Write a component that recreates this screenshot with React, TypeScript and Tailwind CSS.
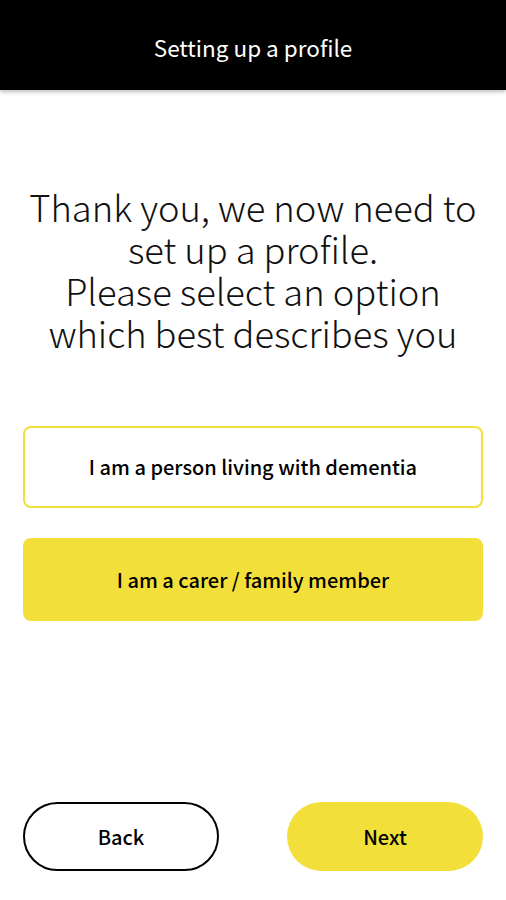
export default function App() {
  return (
    <div
      className="flex h-[900px] w-full flex-col bg-white text-black"
      style={{ fontFamily: '"Noto Sans CJK JP", "Noto Sans", sans-serif' }}
    >
      {/* Header */}
      <header className="flex h-[90px] items-center justify-center bg-black shadow-[0_2px_4px_rgba(0,0,0,0.25)]">
        <h1 className="pt-[6px] text-[22.5px] font-normal text-white">Setting up a profile</h1>
      </header>

      {/* Prompt */}
      <div className="mt-[95px] px-2 text-center text-[36.3px] font-light leading-[42px] text-[#111]">
        Thank you, we now need to
        <br />
        set up a profile.
        <br />
        Please select an option
        <br />
        which best describes you
      </div>

      {/* Options */}
      <div className="mt-[73px] flex flex-col gap-[30px] px-[23px]">
        <button className="flex h-[82px] items-center justify-center rounded-[8px] border-2 border-[#f2df3a] bg-white text-[20px] font-medium">
          I am a person living with dementia
        </button>
        <button className="flex h-[83px] items-center justify-center rounded-[8px] bg-[#f2df3a] text-[20px] font-medium">
          I am a carer / family member
        </button>
      </div>

      {/* Footer nav */}
      <div className="mt-auto mb-[29px] flex items-center justify-between px-[23px]">
        <button className="flex h-[69px] w-[196px] items-center justify-center rounded-full border-2 border-black bg-white text-[20px] font-medium">
          Back
        </button>
        <button className="flex h-[69px] w-[196px] items-center justify-center rounded-full bg-[#f2df3a] text-[20px] font-medium">
          Next
        </button>
      </div>
    </div>
  );
}
